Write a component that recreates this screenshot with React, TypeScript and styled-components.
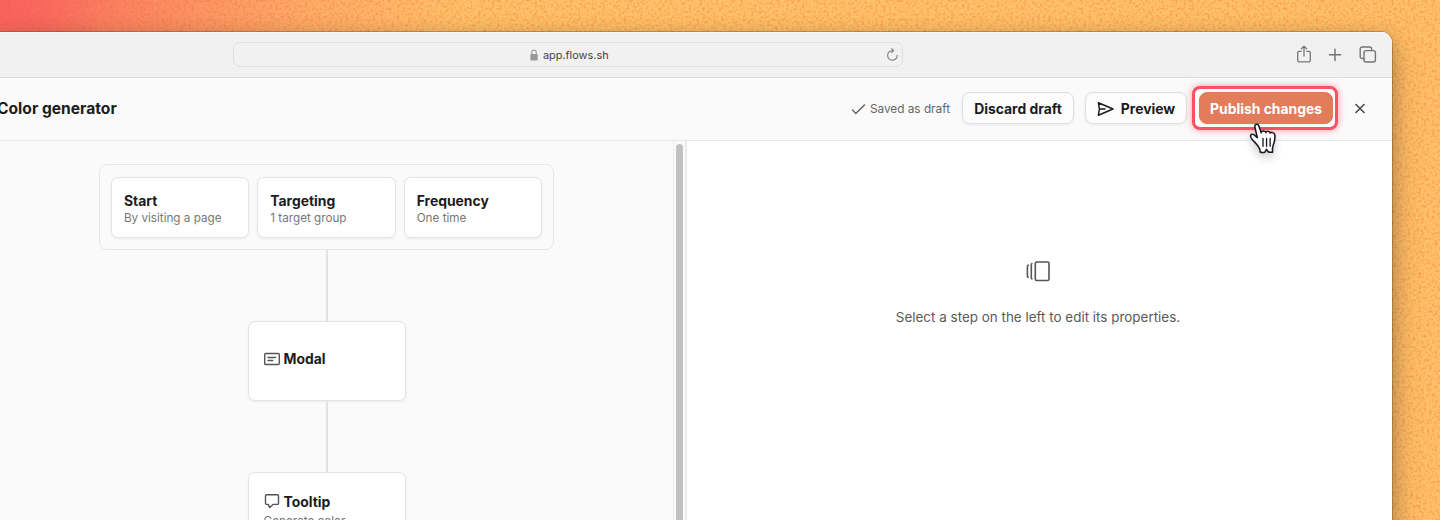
import React from "react";
import styled, { createGlobalStyle } from "styled-components";

const Global = createGlobalStyle`
  * { box-sizing: border-box; }
  html, body { margin: 0; padding: 0; overflow: hidden; }
  body { font-family: Inter, "Liberation Sans", sans-serif; color: #1c1c1c; -webkit-font-smoothing: antialiased; }
`;

const Desktop = styled.div`
  position: relative;
  width: 1440px;
  height: 520px;
  overflow: hidden;
  padding: 32px 48px 0 0;
  background: linear-gradient(105deg, #fa635f 0px, #fa6a60 50px, #fb8462 120px, #fc9864 210px, #feac67 300px, #ffc169 450px, #ffc169 1000px, #ffc067 100%);
`;

const Grain = styled.svg`
  position: absolute;
  inset: 0;
  width: 100%;
  height: 100%;
`;

const WindowShadow = styled.div`
  position: relative;
  border-radius: 0 11px 0 0;
  box-shadow: 0 0 0 1px rgba(90, 60, 20, 0.3), 0 4px 18px rgba(70, 60, 30, 0.25), 0 14px 30px rgba(70, 60, 30, 0.34);
`;

const Window = styled.div`
  position: relative;
  display: flex;
  flex-direction: column;
  height: 560px;
  border-radius: 0 11px 0 0;
  background: #fafafa;
  overflow: hidden;
`;

const Chrome = styled.div`
  display: grid;
  grid-template-columns: 233px 670px 1fr;
  align-items: center;
  flex: none;
  height: 46px;
  background: #f1f1f1;
  border-bottom: 1px solid #dcdcdc;
  box-shadow: inset 0 1px 0 #f8f8f8;
`;

const Address = styled.div`
  grid-column: 2;
  display: flex;
  align-items: center;
  height: 25px;
  padding: 0 3px 0 296px;
  border: 1px solid #dedede;
  border-radius: 7px;
  font-size: 10.9px;
  color: #444;
`;

const AddressText = styled.span`
  margin-left: 5px;
  flex: 1;
`;

const ChromeActions = styled.div`
  display: flex;
  justify-content: flex-end;
  align-items: center;
  gap: 14px;
  padding-right: 15px;
  color: #747474;
`;

const Header = styled.header`
  display: flex;
  align-items: center;
  flex: none;
  height: 63px;
  padding: 0 22px 2px 0;
  background: #fafafa;
  border-bottom: 1px solid #e8e8e8;
`;

const Title = styled.h1`
  flex: 1;
  margin: 0 0 0 -3px;
  font-size: 15.6px;
  font-weight: 700;
  white-space: nowrap;
`;

const Saved = styled.div`
  display: flex;
  align-items: center;
  gap: 4px;
  margin-right: 12px;
  padding-top: 1px;
  font-size: 11.8px;
  color: #666;
`;

const HeaderButtons = styled.div`
  display: flex;
  gap: 11px;
`;

const Button = styled.button<{ $w: number; $primary?: boolean }>`
  display: flex;
  align-items: center;
  justify-content: center;
  gap: 7px;
  flex: none;
  width: ${(p) => p.$w}px;
  height: 32px;
  padding: 2px 0 0;
  border: 1px solid ${(p) => (p.$primary ? "#e07b59" : "#dfdfdf")};
  border-radius: 8px;
  background: ${(p) => (p.$primary ? "#e27c5a" : "#fcfcfc")};
  color: ${(p) => (p.$primary ? "#fff" : "#1c1c1c")};
  box-shadow: 0 1px 3px rgba(0, 0, 0, 0.07);
  font-family: inherit;
  font-size: 13.9px;
  font-weight: 700;
  white-space: nowrap;

  svg {
    margin-top: -1px;
  }
`;

const Highlight = styled.div`
  flex: none;
  margin: 0 12px 0 5px;
  padding: 3px 2px 3px 4px;
  border: 3px solid #fd5163;
  border-radius: 8px;
  background: #fff;
  box-shadow: 0 0 7px rgba(253, 81, 99, 0.6);
`;

const Workspace = styled.div`
  display: flex;
  flex: 1;
  min-height: 0;
`;

const Canvas = styled.main`
  display: flex;
  flex-direction: column;
  align-items: center;
  width: 673px;
  padding: 23px 20px 0 0;
`;

const ScrollTrack = styled.div`
  width: 14px;
  padding: 3px 0 0 2px;
  border-left: 1px solid #ebebeb;
  border-right: 2px solid #ebebeb;
`;

const ScrollThumb = styled.div`
  width: 7px;
  height: 500px;
  border-radius: 4px;
  background: #c1c1c1;
`;

const Group = styled.section`
  display: flex;
  flex: none;
  gap: 8px;
  height: 86px;
  padding: 12px 11px;
  border: 1px solid #e6e6e6;
  border-radius: 8px;
`;

const Card = styled.article`
  width: 138.4px;
  height: 61px;
  padding: 14px 12px 0;
  border: 1px solid #e4e4e4;
  border-radius: 7px;
  background: #fff;
  box-shadow: 0 1px 3px rgba(0, 0, 0, 0.06);
`;

const CardTitle = styled.div`
  display: flex;
  align-items: center;
  gap: 4px;
  font-size: 13.9px;
  line-height: 18px;
  font-weight: 700;
`;

const CardNote = styled.div<{ $gap?: number }>`
  margin-top: ${(p) => p.$gap ?? 0}px;
  font-size: 11.7px;
  line-height: 16px;
  color: #777;
  white-space: nowrap;
`;

const Connector = styled.div<{ $h: number }>`
  flex: none;
  width: 2px;
  height: ${(p) => p.$h}px;
  background: #e2e2e2;
`;

const Step = styled.article<{ $top: number }>`
  flex: none;
  width: 158px;
  height: 80px;
  padding: ${(p) => p.$top}px 15px 0;
  border: 1px solid #e4e4e4;
  border-radius: 7px;
  background: #fff;
  box-shadow: 0 1px 3px rgba(0, 0, 0, 0.06);
`;

const Panel = styled.aside`
  display: flex;
  flex-direction: column;
  align-items: center;
  flex: 1;
  padding: 118px 3px 0 0;
  background: #fff;
`;

const Hint = styled.p`
  margin: 24px 0 0;
  font-size: 13.45px;
  line-height: 20px;
  color: #5a5a5a;
`;

const Pointer = styled.svg`
  position: absolute;
  left: 1244px;
  top: 119px;
  filter: drop-shadow(0 5px 4px rgba(0, 0, 0, 0.18));
`;

const stroke = { fill: "none", stroke: "currentColor", strokeLinecap: "round", strokeLinejoin: "round" } as const;

const groupCards = [
  ["Start", "By visiting a page"],
  ["Targeting", "1 target group"],
  ["Frequency", "One time"],
];

export default function App() {
  return (
    <Desktop>
      <Global />
      <Grain>
        <filter id="grain" x="0" y="0" width="100%" height="100%" colorInterpolationFilters="sRGB">
          <feTurbulence type="fractalNoise" baseFrequency="0.37" numOctaves="2" seed="4" />
          <feColorMatrix values="0 0 0 0 0.93  0 0 0 0 0.36  0 0 0 0 0.2  1.8 0 0 0 -0.8" />
        </filter>
        <rect width="100%" height="100%" filter="url(#grain)" opacity="0.5" />
      </Grain>
      <WindowShadow>
        <Window>
          <Chrome>
            <Address>
              <svg width="8" height="12" viewBox="0 0 8 12">
                <rect x="0.3" y="5" width="7.4" height="6.5" rx="1" fill="#999" />
                <path d="M1.8 5.5V3.2a2.2 2.2 0 0 1 4.4 0v2.3" fill="none" stroke="#999" strokeWidth="1.1" />
              </svg>
              <AddressText>app.flows.sh</AddressText>
              <svg width="13" height="14" viewBox="0 0 13 14" {...stroke} color="#8b8b8b" strokeWidth="1.2">
                <path d="M11.2 7.3A4.8 4.8 0 1 1 6.4 2.6h1.2M5.7.7l2 1.9-2 2" />
              </svg>
            </Address>
            <ChromeActions>
              <svg width="18" height="20" viewBox="0 0 18 20" {...stroke} strokeWidth="1.3">
                <path d="M6.2 6.3H4.2a1.5 1.5 0 0 0-1.5 1.5v7.6a1.5 1.5 0 0 0 1.5 1.5h9.6a1.5 1.5 0 0 0 1.5-1.5V7.8a1.5 1.5 0 0 0-1.5-1.5h-2M9 11V1.2M6.4 3.7 9 1.1l2.6 2.6" />
              </svg>
              <svg width="18" height="18" viewBox="0 0 18 18" {...stroke} strokeWidth="1.5">
                <path d="M8 3.2v11.2M2.400 8.800h11.200" />
              </svg>
              <svg width="18" height="18" viewBox="0 0 18 18" {...stroke} strokeWidth="1.4">
                <rect x="5" y="4.6" width="11.4" height="11.4" rx="2" />
                <path d="M4.800 12.500H3.200a2 2 0 0 1-2-2V3a2 2 0 0 1 2-2h7.400a2 2 0 0 1 2 2v1.400" />
              </svg>
            </ChromeActions>
          </Chrome>
          <Header>
            <Title>Color generator</Title>
            <Saved>
              <svg width="15" height="12" viewBox="0 0 15 12" {...stroke} strokeWidth="1.5">
                <path d="m1.5 7 3.300 3.500L13.500 2" />
              </svg>
              Saved as draft
            </Saved>
            <HeaderButtons>
              <Button $w={112}>Discard draft</Button>
              <Button $w={102}>
                <svg width="17" height="16" viewBox="0 0 17 16" {...stroke} strokeWidth="1.5">
                  <path d="M1.400 1.800 16 8 1.400 14.200 2.400 8ZM2.400 8H8" />
                </svg>
                Preview
              </Button>
            </HeaderButtons>
            <Highlight>
              <Button $w={134} $primary>Publish changes</Button>
            </Highlight>
            <svg width="20" height="20" viewBox="0 0 20 20" {...stroke} color="#444" strokeWidth="1.5">
              <path d="m6 6.500 8 8M14 6.500l-8 8" />
            </svg>
          </Header>
          <Workspace>
            <Canvas>
              <Group>
                {groupCards.map(([title, note]) => (
                  <Card key={title}>
                    <CardTitle>{title}</CardTitle>
                    <CardNote>{note}</CardNote>
                  </Card>
                ))}
              </Group>
              <Connector $h={71} />
              <Step $top={28}>
                <CardTitle>
                  <svg width="16" height="14" viewBox="0 0 16 14" {...stroke} color="#555" strokeWidth="1.4">
                    <rect x="0.7" y="1.5" width="14.6" height="11" rx="1" />
                    <path d="M4 5.500h7.500M4 8.500h4.700" />
                  </svg>
                  Modal
                </CardTitle>
              </Step>
              <Connector $h={71} />
              <Step $top={20}>
                <CardTitle>
                  <svg width="16" height="16" viewBox="0 0 16 16" {...stroke} color="#555" strokeWidth="1.4">
                    <path d="M2.500.8h11a1 1 0 0 1 1 1v7.600a1 1 0 0 1-1 1H9l-3.300 3.200-1.500-3.200H2.500a1 1 0 0 1-1-1V1.800a1 1 0 0 1 1-1Z" />
                  </svg>
                  Tooltip
                </CardTitle>
                <CardNote $gap={2}>Generate color</CardNote>
              </Step>
            </Canvas>
            <ScrollTrack>
              <ScrollThumb />
            </ScrollTrack>
            <Panel>
              <svg width="26" height="24" viewBox="0 0 26 24" {...stroke} color="#555" strokeWidth="1.6">
                <rect x="10.3" y="3" width="13.7" height="18.5" rx="1.5" />
                <path d="M6.900 4.600Q6.300 5 6.300 6v12.500q0 1 .6 1.400M3.200 6.200Q2.400 6.600 2.400 7.600v9.300q0 1 .8 1.400" />
              </svg>
              <Hint>Select a step on the left to edit its properties.</Hint>
            </Panel>
          </Workspace>
        </Window>
      </WindowShadow>
      <Pointer width="38" height="40" viewBox="0 0 34 36">
        <path
          d="M13.1 25.2c-.5-.7-1.5-2.2-3.2-3.9-1.7-1.7-4.3-4.6-4.1-6.1.3-2 2.6-1.7 4.1-.2l2 1.9L9.7 7.3c-.6-2.7 2.6-3.7 3.6-.9l2.1 5.9c.3-2.1 3.5-1.9 4.2-.2.7-1.5 3.3-1.3 3.8.5 1.1-1.2 4.1-.3 4.3 1.8.3 4.2-.1 6.2-1.5 9.2-.9 1.9-.8 3.6-.6 6.2-1.6.3-2.9.3-3.9-.3l-1.5-2.2-1.7 2.7c-1.3.3-3 .2-4-.3-.1-1.7-.5-3.3-1.4-4.5Z"
          fill="#fff"
          stroke="#171724"
          strokeWidth="1.4"
          strokeLinejoin="round"
        />
        <path d="M17 17.5v7M20.2 17.5v7M23.4 17.5v7" stroke="#171724" strokeWidth="1.2" strokeLinecap="round" />
      </Pointer>
    </Desktop>
  );
}
